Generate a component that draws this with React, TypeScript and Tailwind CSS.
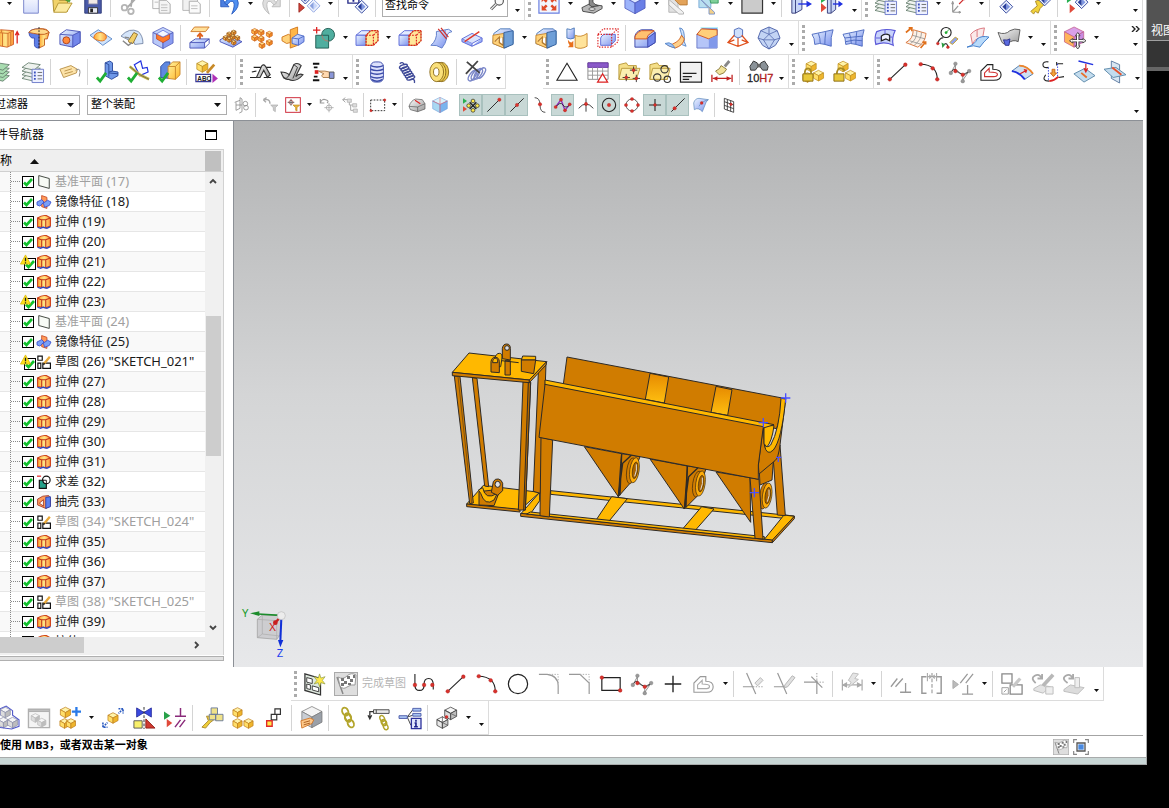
import React from "react";

/* ---------- drawing helpers ---------- */

type CubeProps = { x: number; y: number; s: number; c?: [string, string, string]; k?: string };
const BLUE: [string, string, string] = ["#dfe9ff", "#9db4fb", "#6a7fe6"];
const GOLD: [string, string, string] = ["#fff3a8", "#ffdf6a", "#eeb52c"];
const ORANGE: [string, string, string] = ["#ffe08a", "#ffb648", "#f08a24"];
const GREY: [string, string, string] = ["#f6f6f6", "#dddddd", "#bdbdbd"];

/* Isometric cube centred on (x, y) with half width s */
function Cube({ x, y, s, c = BLUE, k = "#4a55b8" }: CubeProps) {
  const h = s * 0.5;
  const d = s * 1.05;
  return (
    <g stroke={k} strokeWidth={0.8} strokeLinejoin="round">
      <path fill={c[0]} d={`M${x} ${y - d}L${x + s} ${y - d + h}L${x} ${y}L${x - s} ${y - d + h}Z`} />
      <path fill={c[1]} d={`M${x - s} ${y - d + h}L${x} ${y}V${y + d}L${x - s} ${y + h}Z`} />
      <path fill={c[2]} d={`M${x + s} ${y - d + h}L${x} ${y}V${y + d}L${x + s} ${y + h}Z`} />
    </g>
  );
}

const Dot = ({ x, y, r = 2, c = "#d8322c" }: { x: number; y: number; r?: number; c?: string }) => (
  <circle cx={x} cy={y} r={r} fill={c} stroke={c === "#d8322c" ? "#a11" : "#777"} strokeWidth={0.4} />
);
const P = (d: string, fill = "none", stroke = "#333", w = 1, dash?: string) => (
  <path d={d} fill={fill} stroke={stroke} strokeWidth={w} strokeDasharray={dash} />
);
const Diamond = ({ x, y, s = 7, a = "#2a3f9a", b = "#7f97e0" }: { x: number; y: number; s?: number; a?: string; b?: string }) => (
  <g>
    <path d={`M${x} ${y - s}l${s} ${s}l${-s} ${s}l${-s} ${-s}z`} fill="#eef2fd" stroke={a} />
    <path d={`M${x} ${y - s * 0.6}l${s * 0.6} ${s * 0.6}l${-s * 0.6} ${s * 0.6}z`} fill={b} />
    <path d={`M${x} ${y - s * 0.6}l${-s * 0.6} ${s * 0.6}l${s * 0.6} ${s * 0.6}z`} fill={a} />
  </g>
);
const Tick = ({ x, y }: { x: number; y: number }) => (
  <path d={`M${x} ${y}l3.500 4l6.500 -9`} fill="none" stroke="#1fae35" strokeWidth={3} />
);
const Warn = () => (
  <g>
    <path d="M6 1L11.500 11H.5Z" fill="#ffe11c" stroke="#d9b400" strokeWidth={0.8} />
    <path d="M6 4v4M6 9v1.300" stroke="#222" strokeWidth={1.400} />
  </g>
);
const Solid = () => (
  <g>
    {P("M0 9L6 4H16L11 9Z", "#e3ebff", "#5a68d8")}
    {P("M0 9H11V20H0Z", "url(#gb)", "#5a68d8")}
    {P("M11 9L16 4H24V15L19 20H11Z", "#ffe79a", "#c8862a")}
    {P("M11 9H19V20M19 9L24 4M24 4V15L19 20H11V9L16 4H24", "none", "#d22", 1.300, "2 1.200")}
  </g>
);
const Layers = ({ c = "#d9ead9" }: { c?: string }) => (
  <g>
    {[18, 14, 10, 6].map((y) => (
      <path key={y} d={`M0 ${y + 1}L7 ${y - 4}L20 ${y - 2}L13 ${y + 4}Z`} fill={c} stroke="#607a68" strokeWidth={0.9} />
    ))}
  </g>
);
const ListBox = () => (
  <g>
    {P("M11 9H23.500V23.500H11Z", "#eef1ff", "#6a78c8")}
    {P("M13 12.500h2M13 16h2M13 19.500h2", "none", "#3a50c0", 2)}
    {P("M17 12.500h5M17 16h5M17 19.500h5", "none", "#666")}
  </g>
);
const Link = ({ x, y }: { x: number; y: number }) => (
  <g fill="none" stroke="#b3a52c" strokeWidth={2}>
    <ellipse cx={x} cy={y} rx={3.200} ry={4.500} transform={`rotate(-25 ${x} ${y})`} />
    <ellipse cx={x + 3} cy={y + 6} rx={3.200} ry={4.500} transform={`rotate(-25 ${x + 3} ${y + 6})`} />
  </g>
);
const Pulley = ({ x, y }: { x: number; y: number }) => (
  <g stroke="#3a2a10" strokeWidth={2}>
    <ellipse cx={x - 5} cy={y} rx={14} ry={39} fill={D} transform={`rotate(8 ${x} ${y})`} />
    <ellipse cx={x + 4} cy={y - 3} rx={14} ry={38} fill="#ffad08" transform={`rotate(8 ${x} ${y})`} />
    <ellipse cx={x + 6} cy={y - 3} rx={8} ry={25} fill="#a86200" transform={`rotate(8 ${x} ${y})`} />
    <path d={`M${x + 10} ${y - 20}q3 18 -5 36`} fill="none" stroke="#dcdddf" strokeWidth={3} />
  </g>
);

/* ---------- icon set, 24 x 24 ---------- */

const icons: Record<string, React.ReactNode> = {
  new: P("M4 0H15L20 5V22H4Z", "url(#gp)", "#7480c8"),
  open: <>{P("M2 7L7 5L9 8H18V20H3Z", "#f1d269", "#a98b2c")}{P("M3 21L8 11H23L17 21Z", "#fbeaa0", "#b3932e")}{P("M13 5q5-4 7 2l2-1-2 4-4-2 2-1q-2-3-5-2", "#4fa83b", "#3a8a2c", 0.5)}</>,
  save: <>{P("M3 4H19L21 6V22H3Z", "#4a5aa8", "#2d3a78")}{P("M7 4H17V12H7Z", "#f1e8e4", "#8a8aa8")}{P("M7 16H17V22H7Z", "#e8eaf4", "#333")}{P("M9 17h3v4h-3z", "#222", "none")}</>,
  cut: <>{P("M21 3L9 16M15 2L13 15", "none", "#aaa", 2)}<circle cx={6} cy={16} r={3} fill="none" stroke="#b5b5b5" strokeWidth={2} /><circle cx={13} cy={20} r={3} fill="none" stroke="#b5b5b5" strokeWidth={2} /></>,
  copy: <>{P("M3 3H12L15 6V17H3Z", "#fafafa", "#b0b0b0")}{P("M10 8H18L22 12V22H10Z", "#f4f4f4", "#a8a8a8")}{P("M12 13h7M12 16h7M12 19h7M5 7h5M5 10h4", "none", "#bbb")}</>,
  paste: <>{P("M2 4H18V19H2Z", "#f1f1f1", "#b5b5b5")}{P("M6 2h8v4h-8z", "#ccc", "#aaa")}{P("M9 9H18L21 12V22H9Z", "#fafafa", "#aaa")}{P("M11 14h7M11 17h7", "none", "#bbb")}</>,
  undo: <>{P("M3 5V15H12Z", "#4b7fe0", "#2a5bc0")}{P("M7 11Q15 0 21 7Q25 15 15 23Q19 14 17 10Q14 7 10 13Z", "#4f8ff0", "#2a5bc0")}</>,
  redo: <>{P("M21 5V15H12Z", "#dcdcdc", "#bbb")}{P("M17 11Q9 0 3 7Q-1 15 9 23Q5 14 7 10Q10 7 14 13Z", "#dedede", "#bbb")}</>,
  repeat: <><Diamond x={8} y={6} s={6} /><Diamond x={17} y={14} s={7} a="#8ba2e0" b="#c9d7fa" />{P("M1 11L7 16L1 21Z", "#d04038", "#a02a22")}</>,
  cmdbox: <>{P("M1 1H13V11H1Z", "#fff", "#2a2f8a", 1.500)}{P("M4 3.500h6M7 3.500v6", "none", "#1a1f8a", 2)}<Diamond x={16} y={15} s={7} /></>,
  find: <><circle cx={15} cy={8} r={5.500} fill="#f8f8f8" stroke="#555" strokeWidth={1.500} />{P("M11 12L4 19", "none", "#555", 4)}{P("M11 12L4 19", "none", "#eee", 1.500)}</>,
  fit: <>{P("M1 1H23V22H1Z", "#f2f6ff", "#6a7fe0", 1.300)}<g fill="#e04a2a"><path d="M4 4h6l-2 2 2.500 2.500-2 2-2.500-2.500-2 2z" /><path d="M20 4h-6l2 2-2.500 2.500 2 2 2.500-2.500 2 2z" /><path d="M4 19h6l-2-2 2.500-2.500-2-2-2.500 2.500-2-2z" /><path d="M20 19h-6l2-2-2.500-2.500 2-2 2.500 2.500 2-2z" /></g></>,
  part: <>{P("M1 16L9 12L23 14L23 17L14 22L2 20Z", "#b8b8b8", "#444")}{P("M9 13V0H13V10Q15 13 19 14L12 15Z", "#8a8a8a", "#444")}<ellipse cx={12} cy={17.500} rx={3.500} ry={1.500} fill="#eee" stroke="#555" /></>,
  shaded: <Cube x={12} y={11} s={11} />,
  secTan: <>{P("M2 2H12V21H2Z", "#e2e2e2", "#b4b4b4")}{P("M6 1H22V13H14L6 5Z", "#e3a35a", "#b87a34")}{P("M2 7L18 21V23H13L2 13Z", "#f1f1f1", "#b0b0b0")}</>,
  secBlue: <>{P("M1 2H14V16H1Z", "#b8dff0", "#7aa8d8")}{P("M11 0H22V11H14Z", "#7fd09a", "#3a9a60")}{P("M3 7L18 21V23H12L12 17Z", "#f1cf8a", "#7a93c8")}</>,
  swatch: P("M1 0H23.500V22H1Z", "#cbcbcb", "#333", 1.300),
  door: <>{P("M2 6L9 2H13V18L6 22H2Z", "#c8d6f6", "#333a78")}{P("M2 6H6V22M6 6L13 2", "none", "#333a78")}{P("M9 12H20", "none", "#2030e0", 1.500)}{P("M18 8.500L24 12L18 15.500Z", "#2030e0", "none")}</>,
  door2: <>{P("M7 6L12 2H16V18L11 22H7Z", "#c8d6f6", "#333a78")}{P("M7 6H11V22M11 6L16 2", "none", "#333a78")}{P("M0 3L6 7L0 11Z", "#28b050", "none")}{P("M0 11L6 16L0 21Z", "#e04a3a", "none")}{P("M13 12H20", "none", "#2030e0", 1.500)}{P("M19 8.500L24 12L19 15.500Z", "#2030e0", "none")}</>,
  layerList: <><Layers c="#eef2ee" /><ListBox /></>,
  csys: <>{P("M4 21V10M4 21L10 14M4 21H12", "none", "#999", 1.300)}{P("M3 12L4 9L5 12ZM11 20L13 21L11 22Z", "#999", "#999")}{P("M11 12L17 6H23M17 6L13 2", "none", "#d03030", 1.300)}<Dot x={17} y={6} r={1.500} /></>,
  diaHand: <>{P("M11 3Q17-2 21 4Q20 8 15 7Z", "#f3dca8", "#8a6a2a")}<Diamond x={9} y={15} s={7} /></>,
  diaKey: <>{P("M2 20L9 14L7 9L13 7L16 13L12 17L10 22L7 20L5 23Z", "#f1d23c", "#a8882a")}<Diamond x={17} y={8} s={6} /></>,
  playDia: <>{P("M1 2L8 6L1 11Z", "#28b050", "none")}{P("M4 12L10 17L4 22Z", "#e04a3a", "none")}<Diamond x={17} y={10} s={7} /></>,

  extrude: <>{P("M0 6L4 3L18 4V19L11 22L0 20Z", "url(#go)", "#d0602a")}{P("M0 6L12 7V22M12 7L18 4M6 6.500V21M15 6V20M5 3.500V6", "none", "#d0702a")}{P("M22 18V6M20 9L22 5L24 9", "none", "#d22", 1.400)}</>,
  revolve: <>{P("M12 2Q21 1 23 6L21 13H18V20L12 23Z", "url(#go)", "#c05a1c")}{P("M1 6Q3 2 12 2V23Q7 23 7 19V12H4Q1 10 1 6Z", "#5f80e8", "#3a50b8")}{P("M1 6Q3 2 12 2T23 6Q18 9 12 8T1 6Z", "#ffd98a", "#c05a1c")}{P("M12 0V24", "none", "#222", 1, "2 1.500")}</>,
  hole: <>{P("M1 8L8 3L23 5V17L15 22L1 19Z", "url(#gb)", "#4a55b8")}{P("M15 9L23 5V17L15 22Z", "#7387ea", "#4a55b8")}{P("M1 8L15 9", "none", "#4a55b8")}<circle cx={8} cy={14.500} r={3.800} fill="#ff8a3a" stroke="#b0401a" /></>,
  boss: <>{P("M0 9L9 3L24 13L14 20Z", "#cfe3fb", "#5a88c8")}{P("M4 12Q5 6 11 6T18 11Q17 16 11 15T4 12", "url(#go)", "#e07020")}</>,
  cone: <>{P("M0 10Q9 0 19 5Q24 10 24 18L15 19Q14 14 8 14Z", "#d5e5fa", "#7a8aa8")}{P("M8 15L14 6L18 8L13 18L9 17Z", "#f2cf6a", "#8a6a2a")}{P("M2 15L8 20L12 17M4 11L9 12", "none", "#888", 1.500)}</>,
  pocket: <><Cube x={12} y={12} s={11} c={["#c3d4fb", "#b8c8f8", "#8a9cf0"]} />{P("M5 7.500L12 11L19 7.500V13L12 17L5 13Z", "#ff7a28", "#c0401a", 0.8)}{P("M12 3.500L19 7.500L12 11L5 7.500Z", "#f4f7ff", "#5a68d8", 0.8)}</>,
  emboss: <>{P("M6 0H22L18 5H2Z", "#ffe09a", "#d07a28")}{P("M12 14V9M9 10.500L12 7L15 10.500", "none", "#e0601a", 2)}{P("M1 17L7 13H22L17 17V23H1Z", "url(#gb)", "#4a55b8")}{P("M1 17H17L22 13V18L17 23", "none", "#4a55b8")}</>,
  dots: <>{P("M0 14L9 9L24 16L14 22L0 16Z", "url(#gb)", "#4a55b8")}{[[6, 13], [10, 9], [15, 7], [10, 15], [14, 12], [19, 13], [15, 18]].map(([a, b], i) => <Cube key={i} x={a} y={b - 1} s={2.500} c={ORANGE} k="#9a5a1c" />)}</>,
  pattern: <>{[[4, 5], [11, 6], [20, 8], [4, 12], [11, 13], [20, 17], [12, 20]].map(([a, b], i) => <Cube key={i} x={a} y={b} s={3.200} c={ORANGE} k="#d0661c" />)}</>,
  mirror: <>{P("M9 3L17 0V20L9 23Z", "#ffb648", "#d0761c")}{P("M0 11L7 8L9 9V17L5 18L0 15Z", "#ffd27a", "#d0761c")}{P("M11 12L17 8L24 10V16L18 20L11 18Z", "url(#gb)", "#4a68c8")}{P("M11 12L18 13L24 10M18 13V20", "none", "#4a68c8")}</>,
  unite: <>{P("M0 3.500H8M4 0V7", "none", "#d22", 1.400)}<circle cx={16.500} cy={8.500} r={7} fill="#4fae9f" stroke="#1f5a50" />{P("M3 9H17V23H3Z", "#4fae9f", "#1f5a50")}{P("M10 9Q10 15 17 15.500", "none", "#d26a5a", 0.8)}</>,
  trimBody: <Solid />,
  sheet: <>{P("M1 20Q8 14 7 5L17 3Q21 13 13 23Q7 19 1 20Z", "url(#gb)", "#5a78c8")}{P("M17 3Q20 1 24 5Q20 5 18 10", "#dfe8ff", "#5a78c8")}{P("M9 2L18 13M12 1L20 11", "none", "#d0302a", 1.300)}</>,
  divide: <>{P("M1 13L12 7L23 12L12 18Z", "#dbe4fd", "#5a68d8")}{P("M1 13V16L12 21V18M23 12V16L12 21", "#9db0f5", "#5a68d8")}{P("M4 16L20 5", "none", "#e03a2a", 1.500)}</>,
  shell: <>{P("M2 7L9 2H20L23 5V18L14 23L1 18Z", "url(#gb)", "#4a78b8")}{P("M1 9L13 7V23L1 18Z", "#ffd27a", "#c8862a")}{P("M3 16L8 11V17L12 20V11", "#fff", "#b0762a", 1.300)}{P("M13 6L23 4V19L13 23Z", "#6f9fd8", "#34609a")}</>,
  replace: <>{P("M1 2Q5 4 9 1V12Q5 14 1 12Z", "url(#gb)", "#4a78b8")}{P("M10 9Q16 12 23 7V21Q16 25 10 22Z", "#ffe39a", "#c8862a")}{P("M2 14Q4 17 6 17L8 15V22H2L4 20Q2 18 2 14Z", "#e8701c", "none")}</>,
  offset: <>{P("M1 8L7 2H23V16L16 22H1Z", "none", "#d22", 1.200, "1.500 1.500")}{P("M4 12Q6 7 12 8H20V15L15 20H4Z", "url(#gb)", "#5a68d8")}{P("M1 8H16V22M16 8L23 2", "none", "#d22", 1.200, "1.500 1.500")}</>,
  blend: <>{P("M1 10Q2 5 8 3H20L23 6V17L15 22H1Z", "url(#gb)", "#3a45a8")}{P("M15 12L23 6V17L15 22Z", "#7387ea", "#3a45a8")}{P("M1 12Q1 7 8 4H22L18 7Q14 9 14 13H1Z", "#ffc070", "#d0501c")}</>,
  faceBlend: <>{P("M16 1Q22 1 21 16L23 21L18 19Q20 9 16 1Z", "#cfe2fb", "#5a88c8")}{P("M3 20Q15 18 18 9L21 13Q20 20 11 23Z", "#ffd08a", "#d0601c")}{P("M0 18Q5 16 8 19L11 23L5 21Z", "#9fc4fa", "#5a88c8")}</>,
  chamfer: <>{P("M5 0H24V10H5Z", "#b9f0fa", "none")}{P("M1 8L7 2H23V23H1Z", "#b5c5f8", "#6a78c8")}{P("M1 8L6 2L23 3V9L14 13Z", "#ffcf7a", "#d0501c")}{P("M14 13L23 9V23H14Z", "#8098ea", "none")}</>,
  draft: <>{P("M8 3L13 1L17 3V10L12 12L8 10Z", "#cfdffb", "#4a68b8")}{P("M8 9L1 17L12 21L23 17L16 9M12 12V21M1 17L8 14M23 17L16 14", "none", "#e0501c", 1.300)}</>,
  gem: <>{P("M12 0L21 4L24 12L19 20L12 24L5 20L0 12L3 4Z", "#c3d4f4", "#4a60a8")}{P("M3 4L12 8L21 4M12 8L6 14L12 24L18 14L12 8M0 12L6 14H18L24 12M12 0V8", "none", "#4a60a8", 0.8)}</>,

  surf1: <>{P("M0 8Q10 6 23 3Q20 11 21 21L14 19Q8 17 3 19Q3 12 0 8Z", "url(#gb)", "#4a68c0")}{P("M7 7Q9 12 9 18M15 5.500Q14 12 14 19", "none", "#4a68c0")}</>,
  surf2: <>{P("M0 8Q10 6 23 3Q20 11 21 21L14 19Q8 17 3 19Q3 12 0 8Z", "url(#gb)", "#4a68c0")}{P("M7 7Q9 12 9 18M15 5.500Q14 12 14 19M2 12Q10 11 21 10M3 16Q12 13 21 15", "none", "#4a68c0")}</>,
  surf3: <>{P("M3 5Q12 1 23 4Q19 12 21 20Q12 15 2 19Q0 11 3 5Z", "#c8d2fb", "#5a58d8", 1.300)}{P("M8 15V10Q12 6 17 9V15L13 13Z", "#eef1ff", "#222", 1.400)}{P("M2 12H8M17 11H20M12 3V8", "none", "#5a58d8")}</>,
  surf4: <>{P("M1 17Q9 13 9 3L23 7Q22 17 14 22Z", "#fdf1e6", "#d8743a")}{P("M5 15L18 19M8 9L22 13M13 4Q13 14 6 18M18 6Q18 14 10 20", "none", "#888", 0.8)}{P("M1 6L7 1M17 23L22 17M4 1H7.500V4.500M19 16.500H22.500V19", "none", "#e0701a", 1.800)}</>,
  surf5: <><circle cx={11} cy={6} r={5.500} fill="#fff" stroke="#222" strokeWidth={1.200} />{P("M10 7L14 3", "none", "#2a3")}<circle cx={11} cy={6} r={1.500} fill="#2a3" />{P("M15 17L21 11L24 13L18 19Z", "#8fa4f0", "#c8a020")}{P("M2 17Q5 11 8 12M7 21Q12 15 13 22", "none", "#333", 1.300)}<Dot x={2} y={18} r={1.500} /><Dot x={13} y={22} r={1.500} />{P("M6 17L10 19L7 23Z", "#2a9a40", "none")}</>,
  surf6: <>{P("M4 8Q9 2 19 1L17 12Q8 12 6 19Z", "#fbeaea", "#d87078")}{P("M0 22Q9 19 11 13Q16 9 24 11Q18 16 14 22Q7 19 0 22Z", "#b8dafa", "#3a78c8")}{P("M11 3V11", "none", "#d87078")}</>,
  surf7: <>{P("M0 6Q8 9 13 4Q18 1 24 3L22 16Q16 13 11 18Q6 20 4 16Z", "url(#gg)", "#555")}{P("M6 14Q10 15 13 13L12 20L8 20Z", "#5a6ae0", "#2a2f8a")}</>,
  moveFace: <><Cube x={11} y={11} s={10.500} c={["#d9a0e8", "#ffb45a", "#c88ae0"]} k="#c05a8a" />{P("M15 8v14M8 15h14", "none", "#333", 3.500)}{P("M12.500 9.500L15 6L17.500 9.500ZM12.500 20.500L15 24L17.500 20.500ZM9.500 12.500L6 15L9.500 17.500ZM20.500 12.500L24 15L20.500 17.500Z", "#fff", "#333", 0.9)}{P("M15 9v12M9 15h12", "none", "#fff", 1.600)}</>,

  layersA: <Layers c="#a8dcb0" />,
  tag: <>{P("M1 9L13 5L20 9L19 13L5 18Z", "#fde3a8", "#b89048")}{P("M6 11l8-2.500M6 14l9-2.500", "none", "#b89048")}{P("M18 10Q25 6 22 17", "none", "#888")}</>,
  feat1: <>{P("M10 2L15 0L18 2V11L24 12V16L17 20L10 16Z", "#6f98e8", "#2a489a")}{P("M10 2L14 4V17M14 12L18 11M14 13L24 14", "none", "#2a489a")}<Tick x={1} y={18} /></>,
  feat2: <>{P("M8 4L15 0L17 8L22 7L23 12L14 16Z", "#fff", "#2030e0", 1.300)}{P("M3 6L14 15L24 20", "none", "#c8b848", 3)}{P("M3 6L14 15L24 20", "none", "#555", 0.8)}<Tick x={1} y={18} /></>,
  feat3: <>{P("M3 6L8 1H13V19L3 18Z", "#5f88e0", "#2a489a")}{P("M11 6L16 1H24V15L19 20L11 19Z", "url(#gy)", "#c8862a")}{P("M11 6H19V20M19 6L24 1", "none", "#c8862a")}<Tick x={1} y={18} /></>,
  abc: <><Cube x={8} y={6} s={6} c={GOLD} k="#b88a20" />{P("M21 4L13 13", "none", "#c88a28", 3)}{P("M1 14.500H17V22.500H1Z", "#fff", "#3a3a98", 1.400)}<text x={2.500} y={21.300} fontSize={7} fontWeight={700} fontFamily="Liberation Sans" fill="#222">ABC</text>{P("M19 14L25 19L19 24Z", "#b030b8", "none")}</>,
  rib1: <>{P("M0 18H8M15 18H23M2 12L7 11M16 7H23M4 7H13", "none", "#222", 1.200)}{P("M7 18L13 5Q15 3 17 6L22 15L19 18L15 10L11 18Z", "url(#gg)", "#333", 1.200)}</>,
  rib2: <>{P("M0 12Q6 12 9 15L14 4Q18 1 22 5L16 17Q20 13 24 15Q16 24 8 20Q3 21 0 12Z", "url(#gg)", "#333", 1.200)}{P("M2 18Q6 21 9 15M14 4L18 7L13 19", "none", "#333")}</>,
  point: <>{P("M1 3H8M1 21H8", "none", "#111", 2.200)}{P("M2 7H6M2 17H6", "none", "#111", 2)}{P("M3 10h4v4H3z", "#d22", "none")}{P("M7 11H14L19 12V18H12Q9 15 13 14Z", "#ffd9b0", "#a87a48")}{P("M19 12H24V19H19Z", "#8a96d8", "#555")}</>,
  coil: <><rect x={5} y={1} width={14} height={22} rx={5} fill="#dbe0fb" stroke="#3a4aa8" />{P("M5 5Q12 8 19 5M5 9Q12 12 19 9M5 13Q12 16 19 13M5 17Q12 20 19 17M6 20Q12 24 18 20", "none", "#3a4aa8", 1.600)}</>,
  spring: <g fill="none" stroke="#3f4a98" strokeWidth={1.500}>{[0, 1, 2, 3, 4, 5].map((i) => <ellipse key={i} cx={7 + i * 1.600} cy={6 + i * 2.500} rx={4.500} ry={1.800} transform={`rotate(-20 ${7 + i * 1.600} ${6 + i * 2.500})`} />)}<path d="M8 4Q6 0 3 3M15 20Q20 19 19 24" /></g>,
  ring: <><ellipse cx={15} cy={12} rx={7.500} ry={10.500} fill="#e8c54a" stroke="#8a6a1c" /><ellipse cx={12} cy={12} rx={7.500} ry={10.500} fill="#f4d85a" stroke="#8a6a1c" /><ellipse cx={9.500} cy={12} rx={7.500} ry={10.500} fill="#fae07a" stroke="#8a6a1c" /><ellipse cx={9} cy={12} rx={3} ry={4.500} fill="#fff" stroke="#8a6a1c" /></>,
  cutSpring: <><g fill="none" stroke="#7a86c8" strokeWidth={1.500}>{[0, 1, 2, 3].map((i) => <ellipse key={i} cx={8 + i * 3.300} cy={16 - i} rx={3} ry={6.500} transform={`rotate(35 ${8 + i * 3.300} ${16 - i})`} />)}</g>{P("M2 1L16 13M14 0L1 14", "none", "#444", 2)}</>,
  tri: P("M12 2.500L23 21H1Z", "none", "#222", 1.200),
  table: <>{P("M1 2H23V20H1Z", "#fff", "#888")}{P("M1 2H23V7H1Z", "#8a5ac8", "#6a3aa8")}{P("M1 11H23M1 15.500H23M6 7V20M11.500 7V20M17 7V20", "none", "#999")}{P("M17 14L22.500 23H11.500Z", "#fff", "#d22", 1.300)}</>,
  folder1: <>{P("M1 4L9 2L11 5H20V20H1Z", "#f5df88", "#b8983a")}{P("M4 8H24L20 20H1Z", "#fbeeb0", "#b8983a")}{P("M9 14v8M5 18h8M17 6v8M13 10h8M20 15v8M16 19h8", "none", "#333")}<Dot x={9} y={18} r={1.600} /><Dot x={17} y={10} r={1.600} /><Dot x={20} y={19} r={1.600} /></>,
  folder2: <>{P("M1 4L9 2L11 5H20V20H1Z", "#f5df88", "#b8983a")}{P("M4 8H23L20 20H1Z", "#fbeeb0", "#b8983a")}<g fill="none" stroke="#333" strokeWidth={1.200}><circle cx={9} cy={18} r={4} /><circle cx={17} cy={9} r={4} /><circle cx={20} cy={20} r={3.500} /></g></>,
  note: <>{P("M0.500 1.500H23.500V23H0.500Z", "#f0f0f0", "#222", 1.300)}{P("M3 13.500H18M3 17H13M3 20H10", "none", "#222", 1.200)}</>,
  brush: <>{P("M20 0L15 6", "none", "#888", 3)}{P("M11 5L17 9Q15 14 9 15L5 11Q10 9 11 5Z", "#f1e29a", "#8a7a3a")}{P("M1 15V23M23 15V23M2 19H22", "none", "#c02020", 1.400)}{P("M2 19L7 16.500V21.500ZM22 19L17 16.500V21.500Z", "#c02020", "none")}</>,
  h7: <>{P("M6 0L10 2L11 6L8 10H3L2 6ZM18 0L14 2L13 6L16 10H21L22 6Z", "#8a9298", "#333")}{P("M10 3H14V7H10Z", "#666", "none")}<text x={-1} y={23} fontSize={12} fontFamily="Liberation Sans" fill="#222" stroke="#222" strokeWidth={0.3}>10<tspan fill="#b02020" stroke="#b02020">H7</tspan></text></>,
  lock1: <><Cube x={10} y={6} s={5.500} c={GOLD} k="#c09020" /><Cube x={18} y={16} s={5.500} c={GOLD} k="#c09020" /><Cube x={6} y={18} s={5} c={GOLD} k="#c09020" />{P("M3 14Q3 8 6.500 8T10 14", "none", "#a88a20", 2)}{P("M1 14H12V22H1Z", "#e8c83a", "#8a6a10")}</>,
  lock2: <><Cube x={11} y={6} s={5.500} c={GOLD} k="#c09020" /><Cube x={19} y={16} s={5.500} c={GOLD} k="#c09020" />{P("M4 14Q5 7 9 8T12 11", "none", "#a88a20", 2)}{P("M1 14H12V22H1Z", "#e8c83a", "#8a6a10")}</>,
  line: <>{P("M3 20L20 4", "none", "#222", 1.200)}<Dot x={3} y={20} /><Dot x={20} y={4} /></>,
  arc: <>{P("M3 3.500Q21 4 21 20", "none", "#222", 1.200)}<Dot x={3} y={3.500} /><Dot x={16} y={8} /><Dot x={21} y={20} /></>,
  spline: <>{P("M2 13L7 4L7 11L15 15L22 11L15 21V15", "none", "#888", 1)}{P("M2 13Q5 7 8 10T15 15Q18 15 22 11", "none", "#222")}<Dot x={2} y={13} c="#999" /><Dot x={7} y={3} c="#999" /><Dot x={22} y={11} c="#999" /><Dot x={15} y={22} c="#999" /><Dot x={7} y={11} /><Dot x={15} y={15} /></>,
  offCurve: <>{P("M1 21V11L8 4H14V9Q23 9 23 15T15 21Z", "none", "#222", 1.200)}{P("M5 17V13L10 8V12Q19 12 19 14.500T15 17Z", "none", "#d03030", 1.200)}</>,
  proj: <>{P("M1 11L9 5Q18 5 24 14L15 20Q9 12 1 11Z", "#cfe0f2", "#4a78a8")}{P("M9 5Q18 5 24 14", "none", "#f0862a", 2)}{P("M1 11Q9 12 15 20", "none", "#2030e0", 2)}{P("M10 14L17 10M14 9.500L17 10L16 13", "none", "#d22", 1.300)}</>,
  bridge: <>{P("M7 1Q1 0 1 4T7 7M17 3H23M16 1V5", "none", "#222", 1.200)}{P("M7 7V21M17 3V18", "none", "#2030e0", 1, "1.500 1.500")}{P("M4 15Q-1 22 8 22M18 18L24 17", "none", "#222", 1.200)}{P("M11 9H14V13H16L12.500 17L9 13H11Z", "#f0a23a", "#c8661a")}{P("M8 22Q14 21 18 17", "none", "#d22", 1.800)}</>,
  projCrv: <>{P("M1 14L13 8L24 16L12 23Z", "#c3dcee", "#5a88a8")}{P("M6 0L22 4", "none", "#2030e0", 1.500)}{P("M14 3V11M12 8L14 12L16 8", "none", "#d22", 1.300)}{P("M9 13L15 18", "none", "#e8702a", 2)}</>,
  intersect: <>{P("M8 0L17 4V24L8 19Z", "#d8e6f2", "#5a78a0")}{P("M0 9L13 7L24 15L10 18Z", "#c3dcee", "#5a88a8")}{P("M9 7L19 15", "none", "#e8502a", 2)}</>,

  wireCubes: <g fill="none" stroke="#888" strokeWidth={1.200}><path d="M1 8L9 5V17L3 20V8M9 5V1L12 3V22L8 24M3 12H12" /><circle cx={17} cy={10} r={3.500} /><circle cx={18} cy={16} r={3.500} /></g>,
  filter1: <>{P("M2 4L7 1M2 4L6 8M2 4H8Q12 5 12 10", "none", "#aaa", 2)}{P("M13 12H24L20 16V22L17 20V16Z", "#ccc", "#aaa")}</>,
  filter2: <><rect x={1} y={1} width={22} height={22} fill="#fff" stroke="#d03040" strokeWidth={1.500} /><circle cx={9} cy={8} r={3} fill="none" stroke="#a33" />{P("M9 3V13M4 8H14", "none", "#333")}{P("M12 12H22L18 16V21L16 20V16Z", "#e8b43a", "#c08a20")}</>,
  selUndo: <>{P("M2 3V9H8M2 9Q4 2 10 4T12 9", "none", "#999", 1.600)}<circle cx={15} cy={16} r={4} fill="none" stroke="#999" />{P("M15 9V23M8 16H22", "none", "#999")}</>,
  selTree: <>{P("M8 3H14V8H8ZM16 10H22V15H16ZM17 18H23V23H17Z", "#ddd", "#aaa")}{P("M1 4H8M1 4L5 1M1 4L5 8M11 8V12H16M13 12V20H17", "none", "#aaa", 1.500)}</>,
  marquee: <>{P("M1 4.500H22V20.500H1Z", "none", "#222", 1.400, "2.500 2")}<Dot x={1.500} y={20.500} r={1.800} /><Dot x={22} y={4.500} r={1.800} /></>,
  faceSel: <>{P("M0 14Q3 5 10 3L20 4L24 10V18L13 22L2 19Z", "url(#gg)", "#555")}{P("M13 22V15L24 10M13 15L0 14", "none", "#555")}{P("M9 5L17 10", "none", "#d22", 1.800)}</>,
  cubeSel: <><Cube x={12} y={12} s={11} c={["#d9f2fb", "#a8d8f2", "#7ab4ee"]} k="#6a98d8" />{P("M1 6L12 11L23 6M12 1V23", "none", "#e05a6a", 0.9)}</>,
  snapAll: <>{P("M0 2L6 6L0 10Z", "#28b050", "none")}{P("M0 14L6 18L0 22Z", "#e04a3a", "none")}{P("M10 8L20 18M20 8L10 18", "none", "#222", 2)}<g fill="#ffe84a" stroke="#222"><circle cx={15} cy={6} r={2.800} /><circle cx={15} cy={20} r={2.800} /><circle cx={8.500} cy={13} r={2.800} /><circle cx={21.500} cy={13} r={2.800} /></g></>,
  snapEnd: <>{P("M2 22L20 4", "none", "#222", 1.400)}<Dot x={20} y={4} r={2.600} /></>,
  snapMid: <>{P("M2 22L22 2", "none", "#222", 1.400)}<Dot x={12} y={12} r={2.600} /></>,
  snapCtl: <>{P("M4 1Q12 1 12 12T20 23", "none", "#444", 1.400)}<Dot x={12} y={11} r={2.600} /></>,
  snapPole: <>{P("M1 15L9 4L15 20L22 11", "none", "#9030c0", 2)}{P("M1 15Q8 6 12 12T22 12", "none", "#222", 1.200)}<Dot x={1} y={15} r={2.400} /><Dot x={9} y={4} r={2.400} /><Dot x={15} y={20} r={2.400} /><Dot x={22} y={11} r={2.400} /></>,
  snapX: <>{P("M1 17Q12 4 23 17M12 2V22", "none", "#333", 1.400)}<Dot x={12} y={10.500} r={2.500} /></>,
  snapCtr: <><circle cx={12} cy={12} r={10} fill="none" stroke="#222" strokeWidth={1.600} /><Dot x={12} y={12} r={2.600} /></>,
  snapQuad: <><circle cx={12} cy={12} r={9} fill="none" stroke="#444" strokeWidth={1.300} /><Dot x={12} y={3} r={2.400} /><Dot x={12} y={21} r={2.400} /><Dot x={3} y={12} r={2.400} /><Dot x={21} y={12} r={2.400} /></>,
  snapPt: <>{P("M12 3V21M3 12H21", "none", "#222", 1.600)}<Dot x={12} y={12} r={2.200} /></>,
  snapOn: <>{P("M2 22L22 2", "none", "#222", 1.400)}<Dot x={7} y={17} r={2.600} /></>,
  snapFace: <>{P("M1 9Q3 2 9 2L23 4Q19 7 18 12L14 22Q8 15 2 19Z", "url(#gb)", "#5a88b8")}{P("M9 14Q12 7 23 4", "none", "#5a88b8")}<Dot x={13} y={9} r={2.200} /></>,
  snapGrid: <>{P("M5 2L19 7V23L5 18ZM9.500 4V20M14.500 5.500V21.500M5 7L19 12M5 12.500L19 17.500", "#fff", "#333", 1.300)}<Dot x={15} y={11} r={2} /></>,

  sketchNew: <>{P("M1 1L18 6V24L1 19Z", "#dfe9df", "#333", 1.400)}{P("M3 5L9 6.500V11.500L3 10ZM3 12L7 13V18L3 17ZM9 14L16 16V20.500L9 18.500Z", "#fff", "#333")}{P("M17 1L18.500 5.500L23 4L20 8L23 12L18.500 10.500L17 15L15.500 10.500L11 12L14 8L11 4L15.500 5.500Z", "#ffe94a", "#8a9a48", 0.7)}</>,
  flag: <><rect x={0.500} y={0.500} width={23} height={23} fill="#dedede" stroke="#aaa" />{P("M3 5L9 22", "none", "#888", 1.500)}{P("M4 5Q9 8 13 4T22 3L21 13Q17 12 13 15T6 14Z", "#fff", "#999")}{P("M7 6h3v3h-3zM13 4h3v3h-3zM10 9h3v3h-3zM16 7h3v3h-3zM7 11h3v3h-3zM14 11h3v2h-3zM19 3h2v3h-2z", "#777", "none")}</>,
  profile: <>{P("M1 1V13Q1 19 6 19T11 13V12Q11 6 16 6T21 13V18", "none", "#222", 1.200)}<Dot x={1} y={13} /><Dot x={11} y={13} /><Dot x={20} y={13} /></>,
  circle: <circle cx={12} cy={12} r={10.500} fill="none" stroke="#222" strokeWidth={1.300} />,
  fillet: <>{P("M1 1.500H10Q22 3 22 14V23", "none", "#999", 1.300)}{P("M12 1.500H22V12", "none", "#aaa", 1, "1.500 1.500")}</>,
  chamf2: <>{P("M0 1.500H12L22 11V23", "none", "#999", 1.300)}{P("M12 1.500H22V11", "none", "#aaa", 1, "1.500 1.500")}</>,
  rect: <>{P("M2 5H22V19H2Z", "none", "#222", 1.300)}<Dot x={2} y={5} /><Dot x={22} y={19} /></>,
  plus: P("M12 3V21M3 12H21", "none", "#222", 1.500),
  offGrey: <>{P("M1 21V11L8 4H14V9Q22 9 22 15T15 21Z", "none", "#999", 1.200)}{P("M5 17V13L10 8V12Q18 12 18 14.500T15 17Z", "none", "#aaa", 1.200)}</>,
  quickTrim: <>{P("M5 0L15 23M1 15H11", "none", "#999", 1.300)}{P("M12 15H23", "none", "#999", 1, "1.500 1.500")}{P("M14 11L20 5L23 8L17 14Z", "#e4e4e4", "#b5b5b5")}</>,
  quickExt: <>{P("M5 0L15 23M1 15H15", "none", "#999", 1.300)}{P("M13 13L21 3L24 5L16 15L12 16Z", "#e0e0e0", "#b0b0b0")}</>,
  corner: <>{P("M14 8V23M0 10H14M8 4L20 16", "none", "#999", 1.300)}{P("M14 10H23M14 0V10", "none", "#999", 1, "1.500 1.500")}</>,
  rapidDim: <>{P("M1.500 7V19M23 7V19M2 13H22M2 13L6 11V15ZM22 13L18 11V15Z", "#aaa", "#aaa", 1.300)}{P("M13 0L19 1L15 6L19 7L8 16L11 10L8 8Z", "#e4e4e4", "#bbb")}</>,
  constr: P("M1 15L8 6M6 15L14 6M17 11V21M11 21H23", "none", "#999", 1.400),
  sym: <>{P("M6 4H1V22H6M17 4H22V22H17", "none", "#999", 1.600)}{P("M7 0V9M17 0V9M7 4H17M9 2L11 4L9 6M15 2L13 4L15 6", "none", "#aaa", 1.200)}{P("M12 0V24", "none", "#999", 1.200, "4 2")}</>,
  showCon: <>{P("M1 8L7 12.500L1 17Z", "#bbb", "#aaa")}{P("M9 11L17 1M15 11L23 1M17 13V23M11 23H23", "none", "#999", 1.400)}</>,
  reattach: <>{P("M1 1H12V11H1ZM10 13H23V23H10Z", "#fff", "#888", 1.400)}{P("M13 15L21 6", "none", "#c8c8c8", 3.500)}{P("M1 16H8V23H1ZM3 21L6 18", "none", "#999")}</>,
  skA: <>{P("M11 6Q8 0 3 3T4 11M11 1V6H6", "none", "#aaa", 2)}{P("M2 17L9 13L20 15L12 22L2 19Z", "#e4e4e4", "#bbb")}{P("M12 14L23 2", "none", "#b8b8b8", 4)}{P("M15 15H23V23H15Z", "#eee", "#bbb")}</>,
  skB: <>{P("M11 6Q8 0 3 3T5 11M11 1V6H6", "none", "#aaa", 2)}{P("M1 18L8 13L23 16L16 23L1 20Z", "#dcdcdc", "#bbb")}{P("M13 5H18V16H13Z", "#eee", "#bbb")}</>,

  asmA: <><Cube x={9} y={6} s={5.500} c={GREY} k="#8a8ea8" /><Cube x={7} y={17} s={5.500} c={GREY} k="#8a8ea8" /><Cube x={17} y={17} s={5.500} c={GREY} k="#8a8ea8" />{P("M3 2L10 -1L17 4V9L24 14V21L16 24L1 22V12L3 9Z", "none", "#5058c8", 1.200)}</>,
  asmB: <>{P("M0.500 2.500H23.500V22.500H0.500Z", "#f4f4f4", "#b0b0b0", 1.500)}{P("M1 4.500H23", "none", "#b0b0b0", 2)}<Cube x={8} y={12} s={4.500} c={GREY} k="#bbb" /><Cube x={15} y={17} s={4.500} c={GREY} k="#bbb" /></>,
  asmAdd: <><Cube x={7} y={6} s={5.500} c={GOLD} k="#c0801c" /><Cube x={6} y={18} s={5} c={GOLD} k="#c0801c" /><Cube x={13} y={18} s={5} c={GOLD} k="#c0801c" />{P("M19 0V10M14 5H24", "none", "#2a7ae8", 2.500)}</>,
  asmMove: <><Cube x={12} y={12} s={5.500} c={GOLD} k="#c0801c" />{P("M1 22L6 17M1 17V22H6M23 2L18 7M18 2H23V7", "none", "#2a5ac0", 1.700, "2 1")}</>,
  asmMir: <>{P("M4 1L12 6L4 11ZM20 1L12 6L20 11Z", "#3a4ae0", "#2a2fa0")}{P("M12 0V24", "none", "#222", 1, "3 1.500")}{P("M1 15H10V23H1Z", "#f8f06a", "#555")}{P("M14 13V23H24Z", "#d03a30", "#902018")}</>,
  asmCon: <>{P("M0 5L7 9.500L0 14Z", "#28a048", "none")}{P("M3 13L9 17.500L3 22Z", "#e04a3a", "none")}{P("M18 1V10M12 10H24M12 22L18 14M17 22L23 14", "none", "#8a2a7a", 1.600)}</>,
  wrench: <>{P("M1 22L8 15L6 10H11L14 14L10 17L5 23Z", "#f0cf3a", "#a8882a")}{P("M11 1H18V8H11ZM9 8H16V14H9ZM16 8H24V15H16Z", "#f0e28a", "#6a7a98")}</>,
  threeCubes: <><Cube x={6} y={6} s={5} c={GOLD} k="#c0801c" /><Cube x={6} y={18} s={5} c={GOLD} k="#c0801c" /><Cube x={18} y={18} s={5} c={GOLD} k="#c0801c" /></>,
  chain3: <>{P("M9 8H15V14H9ZM13 2H19V8H13Z", "#fff", "#333", 1.300)}{P("M4 15H10V21H4Z", "#ffe94a", "#e02a2a", 1.500)}</>,
  tagBox: <><Cube x={13} y={11} s={11} c={["#f4f4f4", "#c8cdd4", "#9aa0a8"]} k="#777" />{P("M1 15L11 12L15 14L13 18L2 23Z", "#fdc98a", "#d0762a")}{P("M4 17l7-2M4 19.500l7-2", "none", "#a85a1c")}</>,
  link: <><Link x={9} y={5} /><Link x={12} y={12} /></>,
  linkBar: <>{P("M6 3H23V7H6Z", "#e8e8e8", "#444")}{P("M9 3V7", "none", "#444")}{P("M6 5H2V12M0 9L2 13L4 9", "none", "#333", 1.400)}<g transform="translate(8 8) scale(.75)"><Link x={10} y={6} /><Link x={12} y={12} /></g></>,
  infoTree: <>{P("M0 11H9M9 11L15 3M9 11L15 9M9 11L13 20", "none", "#333")}{P("M0 9.500H9V12.500H0ZM15 1.500H24V4.500H15ZM15 7H24V10H15Z", "#a8c3f2", "#4a5aa8")}{P("M13.500 12.500H24V23.500H13.500Z", "#dfe4fb", "#2a2f9a", 1.400)}{P("M18.500 14V16M17 17.500H18.500V21.500M16.500 21.500H20.500", "none", "#1a1f8a", 1.800)}</>,
  wireTwo: <><Cube x={16} y={7} s={6.500} c={GREY} k="#333" /><Cube x={7} y={17} s={6} c={["#fff", "#e8e8e8", "#ccc"]} k="#333" />{P("M1 14L13 20M7 10V23M10 4L22 10", "none", "#555", 0.8)}<Dot x={11.500} y={11} r={1.600} /></>,
  fullscr: <>{P("M1 6V1H6M18 1H23V6M23 18V23H18M6 23H1V18", "none", "#888", 1.800)}{P("M6 6H18V18H6Z", "#fff", "#555", 2)}{P("M8 8H16V16H8Z", "#4a8ae0", "none")}</>,

  /* tree icons, drawn denser to stay legible at 14px */
  tExtrude: <>{P("M1 5Q8 0 16 1L23 5V19L15 22L1 20Z", "url(#go)", "#d0441c", 2)}{P("M1 5Q5 8 8 8H15L23 5M8 8V21M15 8V22", "none", "#c0341c", 1.800)}{P("M1 21L6 23L11 21L17 23L23 20", "none", "#2a48c8", 2.200)}</>,
  tPlane: P("M3 1L21 6V23L3 18Z", "#f8fbf6", "#3a4038", 1.600),
  tMirror: <>{P("M8 1L17 4V23L8 20Z", "#ff9a5a", "#c8502a", 1.500)}{P("M0 12L8 8L12 12L5 19L0 17Z", "#7aa0f8", "#3a50d0", 1.500)}{P("M11 14L18 9L24 12L21 18L13 21Z", "#7aa0f8", "#3a50d0", 1.500)}</>,
  tSketch: <>{P("M1.500 2H9V9H1.500ZM1.500 14H6.500V23H1.500ZM10 14H23V23H10Z", "#fff", "#111", 2)}{P("M12 15L22 3", "none", "#e8a83a", 4)}{P("M11 17L13 14", "none", "#222", 2.500)}</>,
  tSub: <>{P("M0 2H7", "none", "#e02020", 2)}<circle cx={16} cy={8.500} r={6.500} fill="#fff" stroke="#111" strokeWidth={2} />{P("M4 9H10Q10 15 16 15V23H4Z", "#24a08a", "#111", 2)}{P("M10 9H16V15", "none", "#111", 1.600)}</>,
  tShell: <>{P("M1 7L10 2L20 1L23 5V19L15 23L1 17Z", "#ff9a5a", "#a03a2a", 1.500)}{P("M4 14L11 8V19Z", "#fff", "#a03a2a", 1.500)}{P("M15 4L23 3V20L15 23Z", "#5a80f0", "#2a3aa8", 1.500)}</>,
};

const Svg = ({ name, size }: { name: string; size: string }) => (
  <svg viewBox="0 0 24 24" className={`${size} shrink-0 overflow-visible`} aria-hidden="true">
    {icons[name]}
  </svg>
);

/* ---------- toolbar parts ---------- */

const Caret = () => (
  <svg viewBox="0 0 5 3" className="h-[3px] w-[5px]" aria-hidden="true"><path d="M0 0H5L2.500 3Z" fill="#111" /></svg>
);
const Overflow = () => (
  <button aria-label="工具条选项" className="flex h-full w-[14px] shrink-0 items-center justify-center pt-[13px]"><Caret /></button>
);
const Grip = () => <span className="ml-[3px] mr-[2px] h-[26px] w-[3px] shrink-0 border-l-[3px] border-dotted border-[#ababab]" />;

/* "|" is a separator, "v" a drop-down arrow; anything else names an icon */
function Items({ list }: { list: string }) {
  return (
    <>
      {list.split(" ").map((n, i) =>
        n === "|" ? (
          <span key={i} className="mx-[2px] h-[26px] w-[2px] shrink-0 border-l border-[#d4d4d4]" />
        ) : n === "v" ? (
          <button key={i} aria-label="更多" className="flex h-full w-[12px] shrink-0 items-center justify-center"><Caret /></button>
        ) : (
          <button key={i} aria-label={n} className="flex h-full w-[31px] shrink-0 items-center justify-center"><Svg name={n} size="size-[22px]" /></button>
        )
      )}
    </>
  );
}

function Bar({ list, grip = true, className = "", last = false, children }: { list: string; grip?: boolean; className?: string; last?: boolean; children?: React.ReactNode }) {
  return (
    <div role="toolbar" className={`flex h-full items-center border-b border-r border-[#dcdcdc] ${last ? "min-w-0 flex-1" : "shrink-0"} ${className}`}>
      {grip && <Grip />}
      <Items list={list} />
      {children}
      {last && <span className="flex-1" />}
      <Overflow />
    </div>
  );
}

/* Compact variant: "_" is a blank gap and a leading "+" marks a pressed toggle */
function Small({ list }: { list: string }) {
  return (
    <>
      {list.split(" ").map((n, i) => {
        if (n === "|") return <span key={i} className="mx-[2px] h-[24px] w-px shrink-0 bg-[#d4d4d4]" />;
        if (n === "_") return <span key={i} className="w-2 shrink-0" />;
        if (n === "v") return <button key={i} aria-label="更多" className="flex h-full w-[11px] shrink-0 items-center justify-center"><Caret /></button>;
        const on = n.startsWith("+");
        const name = on ? n.slice(1) : n;
        return (
          <button key={i} aria-label={name} aria-pressed={on} className={`flex h-[22px] w-[23px] shrink-0 items-center justify-center border ${on ? "border-[#a9c1be] bg-[#c8d8d6]" : "border-transparent"}`}>
            <Svg name={name} size="size-4" />
          </button>
        );
      })}
    </>
  );
}

function Combo({ label, options, className }: { label: string; options: string[]; className: string }) {
  return (
    <div className={`relative flex shrink-0 items-center ${className}`}>
      <select aria-label={label} className="h-5 w-full appearance-none border border-[#adadad] bg-white pl-[3px] text-[11px] outline-none">
        {options.map((o) => <option key={o}>{o}</option>)}
      </select>
      <svg viewBox="0 0 7 4" className="pointer-events-none absolute right-[6px] h-1 w-[7px]" aria-hidden="true"><path d="M0 0H7L3.500 4Z" fill="#111" /></svg>
    </div>
  );
}

/* ---------- part navigator ---------- */

type Kind = "plane" | "mirror" | "extrude" | "sketch" | "sub" | "shell";
const kinds: Record<Kind, [string, string]> = {
  plane: ["tPlane", "基准平面"],
  mirror: ["tMirror", "镜像特征"],
  extrude: ["tExtrude", "拉伸"],
  sketch: ["tSketch", "草图"],
  sub: ["tSub", "求差"],
  shell: ["tShell", "抽壳"],
};
type Feature = { n: number; kind: Kind; dim?: boolean; warn?: boolean; suffix?: string };
const special: Feature[] = [
  { n: 17, kind: "plane", dim: true },
  { n: 18, kind: "mirror" },
  { n: 21, kind: "extrude", warn: true },
  { n: 23, kind: "extrude", warn: true },
  { n: 24, kind: "plane", dim: true },
  { n: 25, kind: "mirror" },
  { n: 26, kind: "sketch", warn: true, suffix: ' "SKETCH_021"' },
  { n: 32, kind: "sub" },
  { n: 33, kind: "shell" },
  { n: 34, kind: "sketch", dim: true, suffix: ' "SKETCH_024"' },
  { n: 38, kind: "sketch", dim: true, suffix: ' "SKETCH_025"' },
];
const features: Feature[] = Array.from({ length: 24 }, (_, i) => special.find((f) => f.n === 17 + i) ?? { n: 17 + i, kind: "extrude" });

function FeatureRow({ f }: { f: Feature }) {
  const [icon, label] = kinds[f.kind];
  const id = `feature-${f.n}`;
  return (
    <li className="flex h-5 items-center border-b border-[#e6e6e6] odd:bg-[#f9f9f9]">
      <span className="ml-[10px] h-full w-px shrink-0 border-l border-dotted border-[#8a8a8a]" />
      <span className="w-[9px] shrink-0 border-t border-dotted border-[#8a8a8a]" />
      <span className="relative ml-[2px] grid size-[12px] shrink-0">
        <input id={id} type="checkbox" defaultChecked className={`peer size-[12px] appearance-none border border-black bg-white [grid-area:1/1] ${f.warn ? "translate-x-[2px] translate-y-[2px]" : ""}`} />
        <svg viewBox="0 0 12 12" className={`pointer-events-none invisible size-[12px] [grid-area:1/1] peer-checked:visible ${f.warn ? "translate-x-[2px] translate-y-[2px]" : ""}`} aria-hidden="true">
          <path d="M2 6.500L4.500 9L10 3" fill="none" stroke="#12c22e" strokeWidth={2.600} />
        </svg>
        {f.warn && <svg viewBox="0 0 12 12" className="absolute -left-[2px] -top-[2px] size-[11px]" aria-hidden="true"><Warn /></svg>}
      </span>
      <span className="ml-[3px] flex shrink-0"><Svg name={icon} size="size-[14px]" /></span>
      <label htmlFor={id} className={`ml-[4px] whitespace-pre text-[12px] leading-[18px] ${f.dim ? "text-[#a0a0a0]" : "text-[#1a1a1a]"}`}>
        {label}
        <span className="text-[13px]">{` (${f.n})${f.suffix ?? ""}`}</span>
      </label>
    </li>
  );
}

const Chevron = ({ d }: { d: string }) => (
  <svg viewBox="0 0 8 8" className="size-2" aria-hidden="true"><path d={d} fill="none" stroke="#444" strokeWidth={1.800} /></svg>
);

function Navigator() {
  return (
    <aside className="flex w-[234px] shrink-0 flex-col border-r border-[#8c9096] bg-white">
      <div className="flex h-[28px] shrink-0 items-center justify-between pr-[16px]">
        <h2 className="-ml-1 text-[12px]">件导航器</h2>
        <button aria-label="最大化" className="h-[10px] w-[12px] border border-t-2 border-black" />
      </div>
      <div className="mr-[9px] flex min-h-0 flex-1 flex-col border-r border-t border-[#d2d2d2]">
        <div className="flex h-[22px] shrink-0 items-stretch border-b border-[#d0d0d0] bg-[#efefef] pr-[2px] pt-px">
          <button className="flex flex-1 items-center gap-[18px] text-[12px]">
            称
            <svg viewBox="0 0 9 5" className="h-[5px] w-[9px]" aria-hidden="true"><path d="M0 5L4.500 0L9 5Z" fill="#111" /></svg>
          </button>
          <span className="w-4 bg-[#c0c0c0]" />
        </div>
        <div className="flex min-h-0 flex-1">
          <ul className="h-0 min-h-full flex-1 overflow-hidden">
            {features.map((f) => <FeatureRow key={f.n} f={f} />)}
          </ul>
          <div className="flex w-[18px] shrink-0 flex-col items-center bg-[#f0f0f0] pr-[2px]">
            <button aria-label="向上滚动" className="flex h-[18px] items-center"><Chevron d="M1 6L4 3L7 6" /></button>
            <span className="flex-[126]" />
            <span className="w-[15px] flex-[140] bg-[#cdcdcd]" />
            <span className="flex-[163]" />
            <button aria-label="向下滚动" className="flex h-[18px] items-center"><Chevron d="M1 2L4 5L7 2" /></button>
          </div>
        </div>
        <div className="flex h-[18px] shrink-0 items-start bg-[#f0f0f0] pr-[22px]">
          <span className="h-[16px] w-[84px] bg-[#cdcdcd]" />
          <span className="flex-1" />
          <button aria-label="向右滚动" className="flex h-4 items-center"><Chevron d="M2 1L5 4L2 7" /></button>
        </div>
      </div>
      <div className="mb-[6px] mr-[9px] mt-px h-[5px] shrink-0 border border-l-0 border-[#b0b0b0] bg-[#e2e2e2]" />
    </aside>
  );
}

/* ---------- 3D view ---------- */

const D = "#d07c00";
const Y = "#ffb800";

function Model() {
  const f = (pts: string, fill: string) => <polygon points={pts} fill={fill} />;
  return (
    <svg viewBox="0 0 1140 690" className="absolute left-[196px] top-[209px] h-[230px] w-[380px]" role="img" aria-label="三维模型">
      <g stroke="#2e2a26" strokeWidth={3} strokeLinejoin="round">
        {f("160,466 329,487 270,540 110,522", Y)}
        {f("110,522 270,538 270,546 110,530", D)}
        {f("362,482 1093,558 1090,568 362,493", Y)}
        {f("1062,555 1093,559 1027,632 1003,628", Y)}
        {f("545,500 592,506 535,576 497,572", Y)}
        {f("815,530 852,537 795,602 757,598", Y)}
        {f("329,487 329,512 301,552 272,552", Y)}
        {f("272,550 1027,630 1027,638 272,559", D)}
        {f("301,546 1003,620 1003,628 290,552", Y)}
        {f("1093,559 1093,566 1027,638 1027,630", D)}
        {f("127,143 141,145 176,470 164,468", D)}
        {f("325,128 348,100 345,190 331,490 310,484", D)}
        {f("73,138 90,140 130,519 119,521", D)}
        <path d="M84 140L125 520" strokeWidth={1.500} />
        {f("279,155 302,157 286,540 265,540", D)}
        {f("295,156 302,157 286,540 281,540", "#b86c00")}
        {f("117,69 350,95 298,150 67,127", Y)}
        {f("67,127 298,150 298,158 67,137", D)}
        {f("298,150 350,95 348,105 298,158", "#e89600")}
        <path d="M195 84Q198 70 208 70T216 84L212 110H200Z" fill={Y} />
        <path d="M183 126V95Q185 82 196 82T208 95V128Z" fill={D} />
        <path d="M188 98Q188 85 196 85T203 98Z" fill={Y} />
        <path d="M217 86V55Q219 42 230 42T241 55V90Z" fill={D} />
        <circle cx={231} cy={54} r={7} fill="#dcdddd" />
        <path d="M225 92H241V135H225ZM215 92L266 98" fill={D} />
        {f("274,90 278,78 317,79 317,90", Y)}
        {f("274,90 317,90 311,131 274,124", D)}
        <path d="M147 485L190 480L205 493L192 527L147 525Z" fill={D} />
        <path d="M145 480L158 473Q166 513 202 490L192 510Q165 530 152 490Z" fill={Y} />
        <path d="M184 487L190 455Q195 445 205 447T218 460V482L203 496Z" fill={D} />
        <ellipse cx={203} cy={463} rx={8} ry={9} fill="#e1e2e3" />

        {f("1030,390 1050,345 1066,557 1042,555", D)}
        {f("575,371 630,380 600,460 565,500", D)}
        {f("463,350 575,371 572,400 565,500", D)}
        <Pulley x={609} y={423} />
        <path d="M604 376L578 400L565 500M575 371L570 496" fill="none" strokeWidth={4} />
        {f("772,408 828,416 800,500 763,537", D)}
        {f("660,387 772,408 770,440 763,537", D)}
        <Pulley x={807} y={463} />
        <path d="M804 413L776 440L763 537M772 408L768 532" fill="none" strokeWidth={4} />
        <path d="M988 425L1030 392L1026 450L990 465Z" fill={D} />
        {f("858,426 960,443 962,577", D)}
        <Pulley x={1007} y={499} />
        {f("960,443 987,448 999,627 975,625", D)}
        {f("333,322 368,330 358,561 330,557", D)}

        {f("411,81 1067,206 1040,296 400,163", D)}
        {f("660,130 716,141 703,219 646,208", "url(#band)")}
        {f("858,169 906,179 893,256 843,247", "url(#band)")}
        <path d="M985 405L1000 285L1003 345Q1015 385 1040 310L1067 206L1050 345Q1045 385 1035 392L987 432Z" fill={D} />
        <path d="M1002 287H1032Q1026 335 1010 352L1002 340Z" fill={Y} />
        <path d="M1053 205L1067 207Q1055 330 1030 360Q1010 380 1003 345Q1012 355 1022 345Q1048 300 1053 205Z" fill={Y} />
        {f("345,150 1032,284 1000,294 345,165", Y)}
        {f("345,163 1000,290 985,405 985,448 327,322", D)}
      </g>
      <path d="M1067 190V218M1053 204H1081M1000 264V292M986 278H1014M1038 382H1054M1045 382V396M973 474V502M959 488H987" fill="none" stroke="#4a50ff" strokeWidth={4} />
    </svg>
  );
}

function Triad() {
  return (
    <svg viewBox="30 15 144 165" className="absolute bottom-[7px] left-[6px] h-[55px] w-[48px]" role="img" aria-label="坐标系 X Y Z">
      <path d="M82 58L97 45H155L150 105L140 118L82 113Z" fill="#cdcdd0" stroke="#999" strokeWidth={2} />
      <path d="M82 58L140 62V118M140 62L155 45M97 45V102L82 113M97 102L150 108" fill="none" stroke="#aaa" strokeWidth={2} />
      <path d="M150 46L84 42" stroke="#1c8c2c" strokeWidth={5} />
      <path d="M60 40L88 34V48Z" fill="#1c8c2c" />
      <path d="M154 55L151 125" stroke="#1030d8" strokeWidth={6} />
      <path d="M144 120H160L151 142Z" fill="#1030d8" />
      <path d="M152 50L137 67" stroke="#c82020" strokeWidth={7} />
      <circle cx={136} cy={68} r={7} fill="#c82020" />
      <circle cx={154} cy={47} r={12} fill="#ececec" stroke="#bbb" strokeWidth={2} />
      <g fontFamily="Noto Sans" fontSize={34}>
        <text x={36} y={50} fill="#1c9c2c">Y</text>
        <text x={118} y={92} fill="#d02020">X</text>
        <text x={140} y={170} fill="#2040f0">Z</text>
      </g>
    </svg>
  );
}

/* ---------- application ---------- */

export default function App() {
  return (
    <div className="flex h-screen overflow-hidden bg-black font-['Noto_Sans','Noto_Sans_CJK_SC',sans-serif] text-black">
      <svg className="absolute size-0" aria-hidden="true">
        <defs>
          <linearGradient id="gb" x1="0" y1="0" x2="1" y2="1"><stop offset="0" stopColor="#eaf4ff" /><stop offset="1" stopColor="#7b92ee" /></linearGradient>
          <linearGradient id="gp" x1="0" y1="0" x2="0" y2="1"><stop offset="0" stopColor="#fff" /><stop offset="1" stopColor="#d3dcfb" /></linearGradient>
          <linearGradient id="go" x1="0" y1="0" x2="1" y2="0"><stop offset="0" stopColor="#ffa02a" /><stop offset=".5" stopColor="#ffe68a" /><stop offset="1" stopColor="#ff9a3a" /></linearGradient>
          <linearGradient id="gy" x1="0" y1="0" x2="1" y2="1"><stop offset="0" stopColor="#fff3a0" /><stop offset="1" stopColor="#ffb52a" /></linearGradient>
          <linearGradient id="gg" x1="0" y1="0" x2="1" y2="1"><stop offset="0" stopColor="#fafafa" /><stop offset="1" stopColor="#9a9a9a" /></linearGradient>
          <linearGradient id="band" x1="0" y1="0" x2="0" y2="1"><stop offset="0" stopColor="#e68a00" /><stop offset="1" stopColor="#ffbf10" /></linearGradient>
        </defs>
      </svg>

      <div className="mb-[43px] flex min-w-0 flex-1 flex-col border-b border-r border-[#a8abab] bg-white">
        <div className="flex min-h-0 flex-1 flex-col pr-[3px]">
          <header className="shrink-0 overflow-hidden">
            <div className="-mt-[13px] flex h-[34px] items-stretch">
              <Bar grip={false} className="pl-[3px]" list="v new open save | cut copy paste | undo v redo | repeat v | cmdbox |">
                <label className="ml-[3px] mr-[2px] flex h-[26px] w-[126px] items-center self-center border border-[#adadad]">
                  <input aria-label="查找命令" defaultValue="查找命令" className="h-5 w-[105px] pl-[2px] text-[11px] outline-none" />
                  <Svg name="find" size="size-[18px]" />
                </label>
              </Bar>
              <Bar list="fit v part v shaded v secTan secBlue v swatch v | door door2" />
              <Bar last list="layerList layerList v csys v | diaHand diaKey | playDia v" />
            </div>
            <div className="flex h-[34px] items-stretch">
              <Bar grip={false} className="-ml-2" list="extrude revolve hole boss cone pocket | emboss dots pattern mirror unite v trimBody v trimBody sheet divide shell v shell replace offset | blend faceBlend chamfer draft gem" />
              <Bar list="surf1 surf2 surf3 surf4 surf5 surf6 surf7 v" />
              <div role="toolbar" className="flex min-w-0 flex-1 items-center border-b border-r border-[#dcdcdc]">
                <Grip />
                <Items list="moveFace v" />
                <span className="flex-1" />
                <div className="flex h-full w-[14px] flex-col items-center justify-between pb-[8px] pt-[5px]">
                  <svg viewBox="0 0 9 6" className="h-[6px] w-[9px]" aria-hidden="true"><path d="M1 0L4 3L1 6M5 0L8 3L5 6" fill="none" stroke="#222" strokeWidth={1.400} /></svg>
                  <button aria-label="工具条选项" className="flex"><Caret /></button>
                </div>
              </div>
            </div>
            <div className="flex h-[34px] items-stretch">
              <Bar grip={false} className="-ml-[14px]" list="layersA layerList | tag | feat1 feat2 feat3 | abc" />
              <Bar className="ml-px" list="rib1 rib2 point" />
              <Bar list="coil spring ring | cutSpring" />
              <Bar className="ml-[37px]" list="tri table folder1 folder2 note brush | h7" />
              <Bar list="lock1 lock2" />
              <Bar last list="line arc spline offCurve proj bridge projCrv intersect" />
            </div>
            <div className="flex h-[31px] items-center">
              <Combo label="类型过滤器" options={["过滤器"]} className="-ml-[9px] w-[89px]" />
              <Combo label="选择范围" options={["整个装配"]} className="ml-[7px] mr-[3px] w-[140px]" />
              <Small list="wireCubes | filter1 filter2 v selUndo selTree | marquee v | faceSel cubeSel _ +snapAll +snapEnd +snapMid snapCtl +snapPole snapX +snapCtr snapQuad +snapPt +snapOn snapFace | snapGrid" />
              <span className="flex-1" />
              <Overflow />
            </div>
          </header>

          <main className="flex min-h-0 flex-1 border-t border-[#8c9096]">
            <Navigator />
            <section aria-label="图形窗口" className="relative min-w-0 flex-1 overflow-hidden bg-linear-to-b from-[#b2b3b4] via-[#d4d5d6] via-50% to-[#e7e8ea]">
              <Model />
              <Triad />
            </section>
          </main>

          <footer className="shrink-0">
            <div className="flex h-[34px] items-stretch pl-[291px] pr-[3px]">
              <Bar list="sketchNew">
                <button className="flex items-center gap-[4px] pl-[4px] pr-[3px] text-[11px] text-[#b4b4b4]">
                  <Svg name="flag" size="size-6" />
                  完成草图
                </button>
                <Items list="profile line arc circle fillet chamf2 rect spline plus offGrey v | quickTrim quickExt corner | rapidDim v | constr sym showCon v | reattach skA skB" />
              </Bar>
            </div>
            <div className="flex h-[35px] items-stretch border-b border-[#a4a4a4]">
              <Bar grip={false} className="-ml-2" list="asmA asmB asmAdd v asmMove asmMir asmCon | wrench threeCubes chain3 | tagBox | link linkBar infoTree | wireTwo v" />
            </div>
            <div className="flex h-[21px] items-center pr-[54px]">
              <p className="flex-1 pb-[2px] text-[11px] font-bold">使用 MB3，或者双击某一对象</p>
              <button aria-label="完成" className="mr-1"><Svg name="flag" size="size-4" /></button>
              <button aria-label="全屏"><Svg name="fullscr" size="size-4" /></button>
            </div>
          </footer>
        </div>
        <div className="h-[7px] shrink-0 border-t border-[#a8abab] bg-[#c8d6d5]" />
      </div>

      <div className="w-[22px] shrink-0 overflow-hidden">
        <div className="flex h-[41px] items-end whitespace-nowrap border-b border-[#a0a0a0] bg-[#535353] pl-[4px] text-[12px] text-white">视图</div>
        <div className="h-[30px] border-b-4 border-[#666] bg-[#343434]" />
      </div>
    </div>
  );
}
